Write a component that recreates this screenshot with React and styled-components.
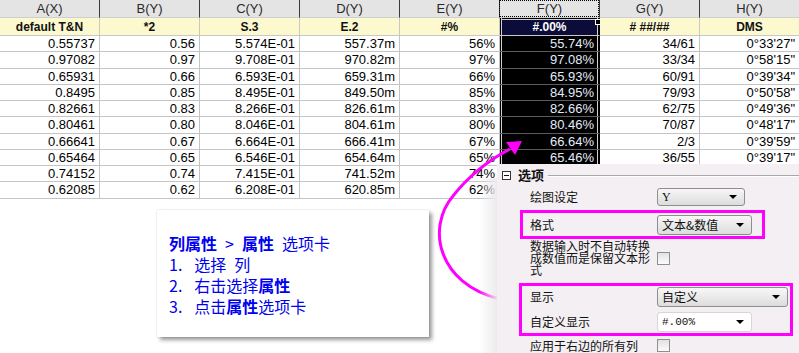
import React from "react";
import styled, { createGlobalStyle, css } from "styled-components";

const GlobalStyle = createGlobalStyle`
  html, body {
    margin: 0;
    padding: 0;
    background: #fff;
  }
  body {
    font-family: "Liberation Sans", Arial, sans-serif;
  }
`;

const Page = styled.div`
  position: relative;
  width: 799px;
  height: 353px;
  overflow: hidden;
  background: #fff;
`;

/* 워크시트 */
const Sheet = styled.div`
  display: grid;
  grid-template-columns: repeat(8, 100px);
  width: 800px;
`;

const HeadCell = styled.div`
  position: relative;
  height: 18px;
  box-sizing: border-box;
  background: #e4e4e4;
  border-right: 1px solid #3a3a3a;
  border-bottom: 1px solid #cfcfcf;
  display: flex;
  align-items: center;
  justify-content: center;
  font-size: 13px;
  color: #2a2a2a;

  ${(p) =>
    p.$active &&
    css`
      &::after {
        content: "";
        position: absolute;
        left: -1px;
        top: 0;
        right: 0;
        bottom: 0;
        border: 1px dotted #000;
      }
    `}
`;

const LabelCell = styled.div`
  position: relative;
  height: 18px;
  box-sizing: border-box;
  background: #fdf9cf;
  border-right: 1px solid #c8c8c8;
  border-bottom: 1px solid #c8c8c8;
  display: flex;
  align-items: center;
  justify-content: center;
  font-size: 12px;
  font-weight: 700;
  color: #111;

  ${(p) =>
    p.$active &&
    css`
      background: #0c0c3a;
      color: #fff;
      border-right-color: #000;
      box-shadow: inset 1px 0 0 #000, inset 2px 0 0 #d0d0d0,
        inset -1px 0 0 #000, inset -2px 0 0 #d0d0d0, inset 0 1px 0 #000,
        inset 0 2px 0 #d0d0d0;

      /* 채우기 핸들 */
      &::after {
        content: "";
        position: absolute;
        right: -2px;
        top: 1px;
        width: 4px;
        height: 4px;
        background: #000;
        border: 1px solid #fff;
      }
    `}
`;

const DataCell = styled.div`
  height: 16.25px;
  box-sizing: border-box;
  border-right: 1px solid #c4c4c4;
  border-bottom: 1px solid #c4c4c4;
  display: flex;
  align-items: center;
  justify-content: flex-end;
  padding-right: 4px;
  font-size: 13px;
  color: #000;

  ${(p) =>
    p.$active &&
    css`
      background: #000;
      color: #e3ebfb;
      border-right-color: #000;
      border-bottom-color: #5c5c5c;
      box-shadow: inset 1px 0 0 #000, inset 2px 0 0 #d0d0d0,
        inset -1px 0 0 #000, inset -2px 0 0 #d0d0d0;
      padding-right: 5px;
    `}
`;

/* 설명 카드 */
const Note = styled.div`
  margin: 11.5px 0 0 157px;
  width: 272px;
  height: 127px;
  box-sizing: border-box;
  padding: 23px 0 0 12px;
  background: #fff;
  box-shadow: 0 0 1px rgba(0, 0, 0, 0.25), 3px 3px 4px rgba(0, 0, 0, 0.4);
  font-family: "Noto Sans CJK SC", sans-serif;
  font-size: 16px;
  line-height: 21px;
  color: #0000f0;
  white-space: pre;
`;

const NoteLine = styled.div`
  height: 21px;
`;

const Strong = styled.b`
  font-weight: 700;
`;

/* 화살표 */
const Overlay = styled.svg`
  position: absolute;
  left: 0;
  top: 0;
  pointer-events: none;
`;

/* 옵션 패널 */
const Panel = styled.div`
  position: absolute;
  left: 497px;
  top: 164px;
  right: 0;
  bottom: 0;
  background: #f3eff3;
  padding: 4px 0 0 5px;
  font-family: "Noto Sans CJK SC", sans-serif;
  font-size: 12px;
  color: #111;

  &::before {
    content: "";
    position: absolute;
    left: -18px;
    top: 14px;
    bottom: 0;
    width: 18px;
    background: linear-gradient(
      to right,
      rgba(238, 236, 238, 0),
      rgba(236, 233, 236, 0.95)
    );
  }
`;

const SectionHead = styled.div`
  display: flex;
  align-items: center;
  height: 14px;
`;

const Toggle = styled.span`
  position: relative;
  width: 9px;
  height: 9px;
  box-sizing: border-box;
  border: 1px solid #333;
  background: #fff;

  &::after {
    content: "";
    position: absolute;
    left: 1px;
    right: 1px;
    top: 3px;
    height: 1px;
    background: #111;
  }
`;

const SectionTitle = styled.span`
  margin-left: 7px;
  font-size: 13px;
  line-height: 14px;
  font-weight: 700;
`;

const Rule = styled.span`
  flex: 1;
  height: 1px;
  margin-left: 4px;
  background: #a8a8a8;
  box-shadow: 0 1px 0 #fff;
`;

const Body = styled.div`
  display: flex;
  flex-direction: column;
  padding-left: 28px;
  margin-top: 6px;
`;

const Row = styled.div`
  display: grid;
  grid-template-columns: 127px auto;
  align-items: center;
  height: ${(p) => p.$h}px;
  margin-top: ${(p) => p.$mt || 0}px;
`;

const Label = styled.span`
  line-height: 12px;
`;

const Highlight = styled.div`
  display: flex;
  flex-direction: column;
  gap: 5px;
  width: ${(p) => p.$w}px;
  margin-left: -${(p) => p.$off}px;
  margin-top: ${(p) => p.$mt}px;
  padding: ${(p) => p.$pad};
  padding-left: ${(p) => p.$off - 3}px;
  box-sizing: border-box;
  border: 3px solid #ff00ff;
`;

const Select = styled.div`
  width: ${(p) => p.$w}px;
  height: ${(p) => p.$h}px;
  box-sizing: border-box;
  border: 1px solid ${(p) => (p.$plain ? "#d6d6d6" : "#8e8e8e")};
  border-radius: 3px;
  background: ${(p) =>
    p.$plain ? "#fff" : "linear-gradient(#f7f7f7, #dcdcdc)"};
  display: flex;
  align-items: center;
  justify-content: space-between;
  padding: 0 7px 0 4px;
  font-size: 12px;
`;

const SelectText = styled.span`
  font-family: ${(p) => p.$font || '"Noto Sans CJK SC", sans-serif'};
  font-size: ${(p) => p.$size || 12}px;
  line-height: 12px;
`;

const Caret = styled.span`
  width: 0;
  height: 0;
  border-left: 4px solid transparent;
  border-right: 4px solid transparent;
  border-top: 4px solid #000;
`;

const Check = styled.span`
  width: 13px;
  height: 13px;
  box-sizing: border-box;
  border: 1px solid #8f8f8f;
  background: linear-gradient(#e2e2e2, #fbfbfb);
`;

const cols = ["A(X)", "B(Y)", "C(Y)", "D(Y)", "E(Y)", "F(Y)", "G(Y)", "H(Y)"];
const formats = ["default T&N", "*2", "S.3", "E.2", "#%", "#.00%", "# ##/##", "DMS"];

// 마지막 두 줄의 F~H는 패널 밑에 가려져 있어서 비워둠
const rows = [
  ["0.55737", "0.56", "5.574E-01", "557.37m", "56%", "55.74%", "34/61", "0°33'27\""],
  ["0.97082", "0.97", "9.708E-01", "970.82m", "97%", "97.08%", "33/34", "0°58'15\""],
  ["0.65931", "0.66", "6.593E-01", "659.31m", "66%", "65.93%", "60/91", "0°39'34\""],
  ["0.8495", "0.85", "8.495E-01", "849.50m", "85%", "84.95%", "79/93", "0°50'58\""],
  ["0.82661", "0.83", "8.266E-01", "826.61m", "83%", "82.66%", "62/75", "0°49'36\""],
  ["0.80461", "0.80", "8.046E-01", "804.61m", "80%", "80.46%", "70/87", "0°48'17\""],
  ["0.66641", "0.67", "6.664E-01", "666.41m", "67%", "66.64%", "2/3", "0°39'59\""],
  ["0.65464", "0.65", "6.546E-01", "654.64m", "65%", "65.46%", "36/55", "0°39'17\""],
  ["0.74152", "0.74", "7.415E-01", "741.52m", "74%", "", "", ""],
  ["0.62085", "0.62", "6.208E-01", "620.85m", "62%", "", "", ""],
];

const ACTIVE = 5;

const App = () => {
  return (
    <Page>
      <GlobalStyle />

      <Sheet>
        {cols.map((c, i) => (
          <HeadCell key={c} $active={i === ACTIVE}>
            {c}
          </HeadCell>
        ))}
        {formats.map((f, i) => (
          <LabelCell key={f} $active={i === ACTIVE}>
            {f}
          </LabelCell>
        ))}
        {rows.map((r, ri) =>
          r.map((v, ci) => (
            <DataCell key={`${ri}-${ci}`} $active={ci === ACTIVE}>
              {v}
            </DataCell>
          ))
        )}
      </Sheet>

      <Note>
        <NoteLine>
          <Strong>列属性</Strong>
          {"\u2002>\u2002"}
          <Strong>属性</Strong>
          {"\u2002选项卡"}
        </NoteLine>
        <NoteLine>{"1.\u2002\u2005选择\u2002列"}</NoteLine>
        <NoteLine>
          {"2.\u2002\u2005右击选择"}
          <Strong>属性</Strong>
        </NoteLine>
        <NoteLine>
          {"3.\u2002\u2005点击"}
          <Strong>属性</Strong>
          {"选项卡"}
        </NoteLine>
      </Note>

      <Overlay width="799" height="353" viewBox="0 0 799 353">
        <path
          d="M 500 299 C 438 284, 426 228, 453 196 C 467 178, 488 160, 510 149"
          fill="none"
          stroke="#ff00ff"
          strokeWidth="3"
        />
        <polygon points="522,141 506,142 515,155" fill="#ff00ff" />
      </Overlay>

      <Panel>
        <SectionHead>
          <Toggle />
          <SectionTitle>选项</SectionTitle>
          <Rule />
        </SectionHead>

        <Body>
          <Row $h={18}>
            <Label>绘图设定</Label>
            <Select $w={88} $h={18}>
              <SelectText $font='"Liberation Serif", serif' $size={12}>
                Y
              </SelectText>
              <Caret />
            </Select>
          </Row>

          <Highlight $w={245} $off={10} $mt={4} $pad="0">
            <Row $h={23}>
              <Label>格式</Label>
              <Select $w={95} $h={20}>
                <SelectText>文本&amp;数值</SelectText>
                <Caret />
              </Select>
            </Row>
          </Highlight>

          <Row $h={36} $mt={1}>
            <Label>数据输入时不自动转换成数值而是保留文本形式</Label>
            <Check />
          </Row>

          <Highlight $w={274} $off={11} $mt={7} $pad="1px 0 1px 0">
            <Row $h={20}>
              <Label>显示</Label>
              <Select $w={131} $h={20}>
                <SelectText>自定义</SelectText>
                <Caret />
              </Select>
            </Row>
            <Row $h={20}>
              <Label>自定义显示</Label>
              <Select $w={95} $h={20} $plain>
                <SelectText $font='"Liberation Mono", monospace' $size={11}>
                  #.00%
                </SelectText>
                <Caret />
              </Select>
            </Row>
          </Highlight>

          <Row $h={13} $mt={3}>
            <Label>应用于右边的所有列</Label>
            <Check />
          </Row>
        </Body>
      </Panel>
    </Page>
  );
};

export default App;
